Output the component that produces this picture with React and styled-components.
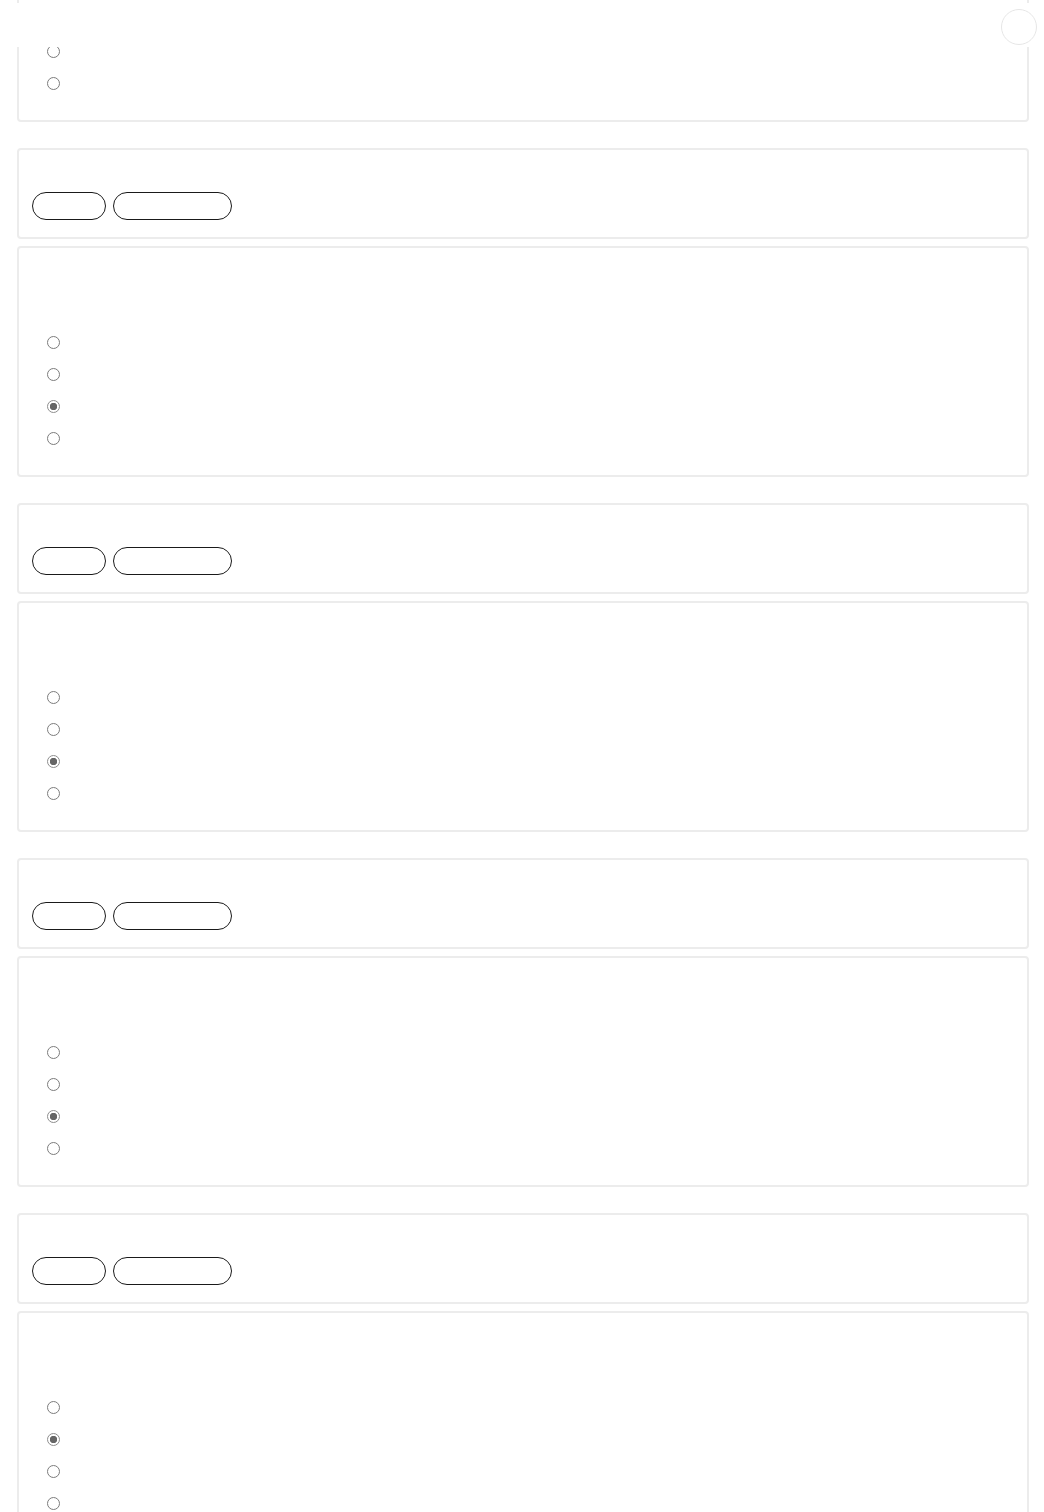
import React from "react";
import styled, { createGlobalStyle } from "styled-components";

const Global = createGlobalStyle`
  html, body { margin: 0; padding: 0; background: #ffffff; }
  body { font-family: "Liberation Sans", Arial, sans-serif; color: #ffffff; }
`;

const Page = styled.main`
  display: flex;
  flex-direction: column;
  padding: 0 15px 0 17px;
  margin-top: -109px;
`;

const Section = styled.section`
  display: flex;
  flex-direction: column;
  gap: 7px;
  margin-bottom: 26px;
`;

const Card = styled.div`
  box-sizing: border-box;
  border: 2px solid #ececec;
  border-radius: 4px;
  background: #ffffff;
`;

const HeaderCard = styled(Card)`
  height: 91px;
  padding: 42px 13px 0;
`;

const Pills = styled.div`
  display: flex;
  gap: 7px;
`;

const Pill = styled.button`
  box-sizing: border-box;
  height: 28px;
  width: ${(p) => p.$w}px;
  border: 1px solid #1a1a1a;
  border-radius: 14px;
  background: #ffffff;
  padding: 0;
  cursor: pointer;
`;

const QuestionCard = styled(Card)`
  height: 231px;
  padding: 78px 0 0 28px;
`;

const Options = styled.div`
  display: flex;
  flex-direction: column;
`;

const Option = styled.label`
  display: flex;
  align-items: center;
  height: 32px;
`;

const Radio = styled.input`
  appearance: none;
  -webkit-appearance: none;
  box-sizing: border-box;
  width: 13px;
  height: 13px;
  margin: 0;
  border-radius: 50%;
  border: 1px solid #7c7c7c;
  background: #ffffff;

  &:checked {
    border-color: #8e8e8e;
    background: radial-gradient(circle, #666666 0, #666666 3.4px, #ffffff 4px);
  }
`;

const TopBar = styled.div`
  position: fixed;
  top: 3px;
  left: 0;
  right: 0;
  height: 44px;
  background: #ffffff;
`;

const FloatButton = styled.button`
  position: fixed;
  top: 9px;
  right: 7px;
  width: 36px;
  height: 36px;
  border-radius: 50%;
  border: 1px solid #e6e6e6;
  background: #ffffff;
  padding: 0;
`;

function Question({ name, checked }) {
  return (
    <QuestionCard>
      <Options>
        {[0, 1, 2, 3].map((i) => (
          <Option key={i}>
            <Radio type="radio" name={name} disabled defaultChecked={i === checked} />
          </Option>
        ))}
      </Options>
    </QuestionCard>
  );
}

function Header() {
  return (
    <HeaderCard>
      <Pills>
        <Pill $w={74} />
        <Pill $w={119} />
      </Pills>
    </HeaderCard>
  );
}

export default function App() {
  const items = [2, 2, 2, 1];
  return (
    <>
      <Global />
      <Page>
        <Section>
          <Question name="q0" checked={-1} />
        </Section>
        {items.map((c, i) => (
          <Section key={i}>
            <Header />
            <Question name={`q${i + 1}`} checked={c} />
          </Section>
        ))}
      </Page>
      <TopBar />
      <FloatButton aria-label="menu" />
    </>
  );
}
